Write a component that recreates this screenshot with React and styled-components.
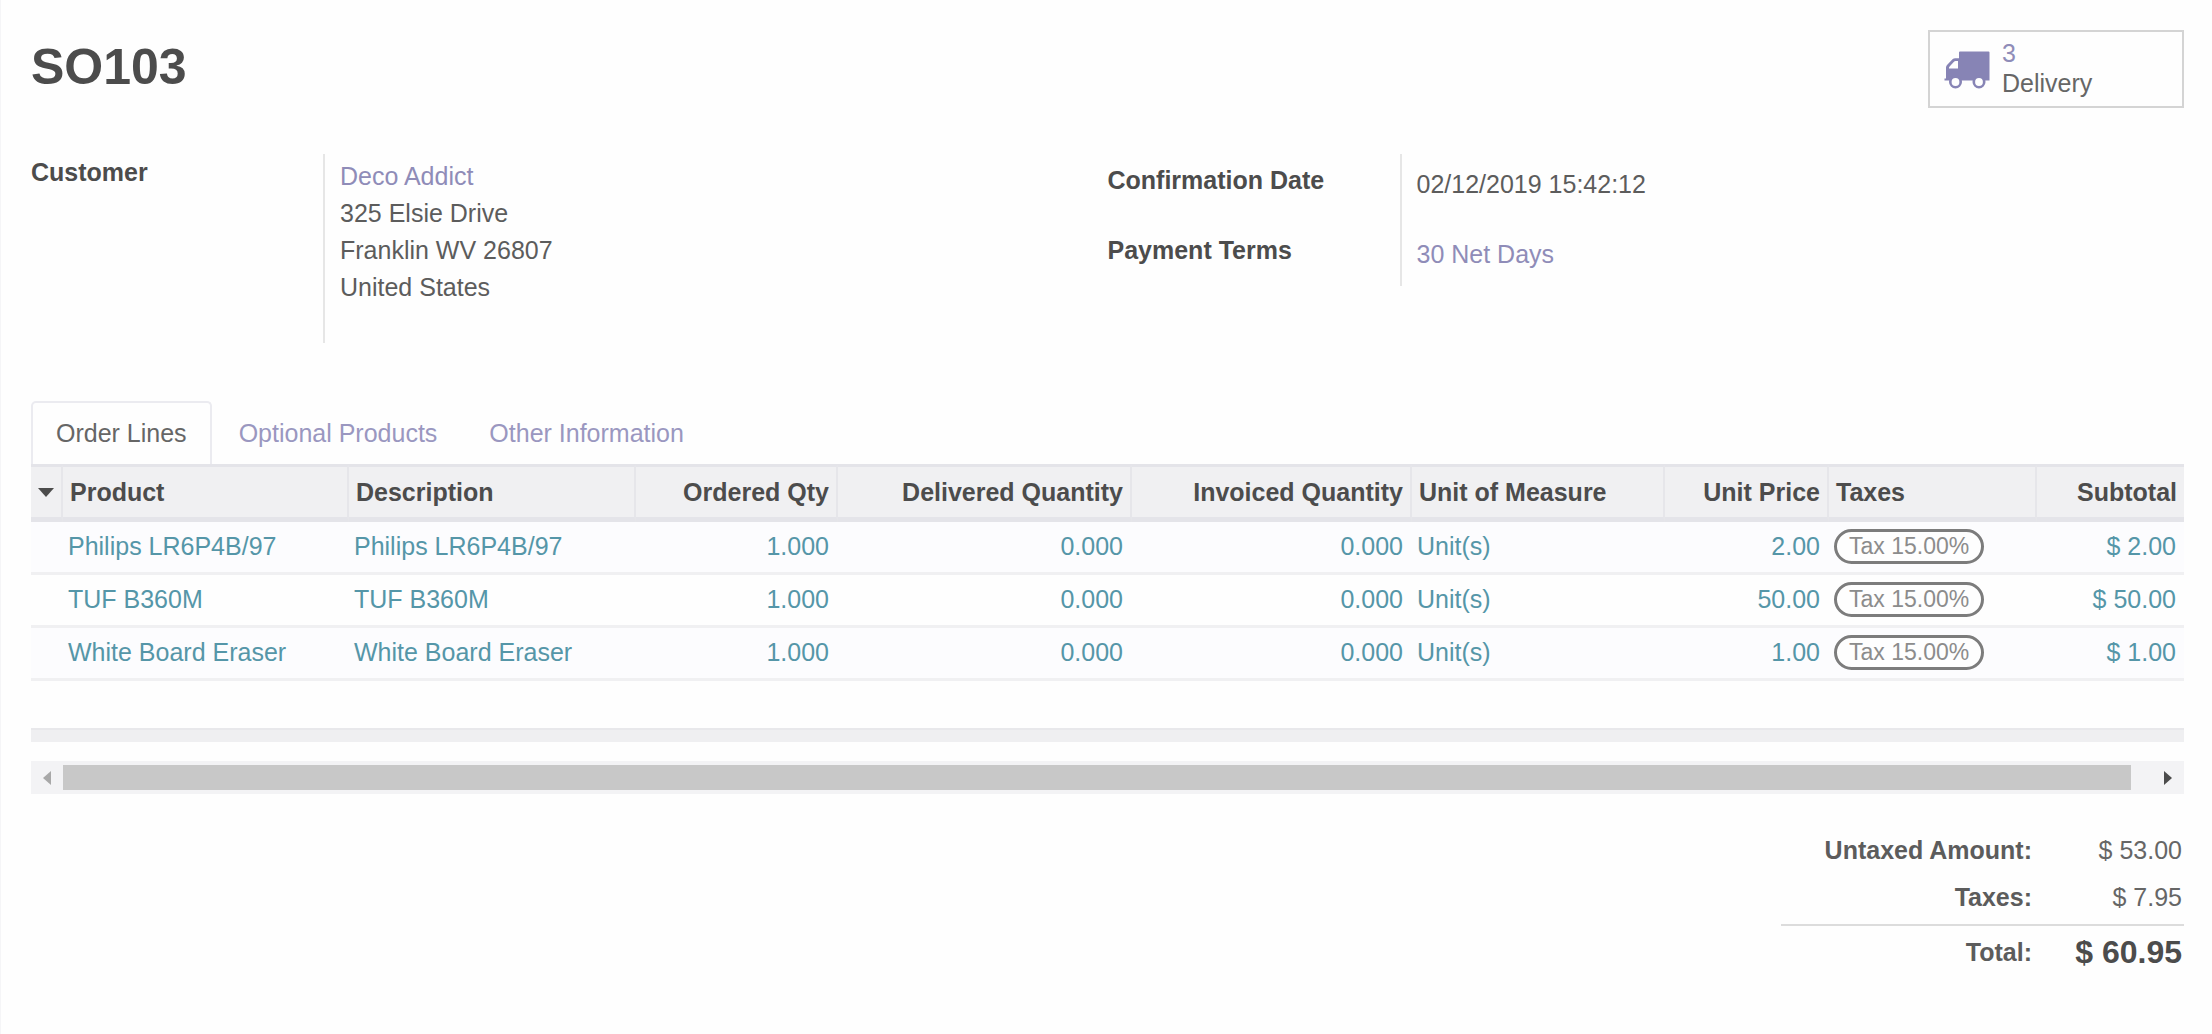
import React, { useState } from "react";
import styled, { createGlobalStyle } from "styled-components";

const GlobalStyle = createGlobalStyle`
  * {
    box-sizing: border-box;
  }
  body {
    margin: 0;
    background: #fefefe;
    color: #4c4c4c;
    font-family: "Liberation Sans", Arial, sans-serif;
    font-size: 25px;
    line-height: 37px;
  }
  button {
    font: inherit;
    color: inherit;
    cursor: pointer;
  }
`;

const Sheet = styled.main`
  min-height: 100vh;
  padding: 30px 28px 40px 30px;
  border-left: 1px solid #f5f5f7;
`;

const Header = styled.header`
  display: flex;
  justify-content: space-between;
  align-items: flex-start;
`;

const Title = styled.h1`
  margin: 9px 0 0;
  font-size: 50px;
  line-height: 56px;
  color: #4c4c4c;
`;

const StatButton = styled.button`
  display: flex;
  align-items: center;
  gap: 12px;
  min-width: 256px;
  height: 78px;
  padding: 0 12px 2px 14px;
  background: none;
  border: 2px solid #d4d4d4;
  line-height: 30px;
  text-align: left;
`;

const TruckIcon = styled.svg`
  width: 46px;
  height: 38px;
  margin-top: 4px;
`;

const StatValue = styled.span`
  display: block;
  color: #8f8cb8;
`;

const StatLabel = styled.span`
  display: block;
  color: #666;
`;

const Details = styled.section`
  display: grid;
  grid-template-columns: 1fr 1fr;
  align-items: start;
  margin-top: 46px;
`;

const Group = styled.dl`
  display: grid;
  grid-template-columns: 292px 1fr;
  margin: 0;
`;

const Label = styled.dt`
  padding-top: ${props => (props.$spaced ? "8px" : "0")};
  font-weight: bold;
`;

const Value = styled.dd`
  margin: 0;
  padding: ${props => (props.$spaced ? "12px 0 21px 15px" : "4px 0 37px 15px")};
  border-left: 2px solid #e6e6e6;
  color: #5c5c5c;
  &:last-child {
    padding-bottom: ${props => (props.$spaced ? "13px" : "37px")};
  }
`;

const Link = styled.a`
  color: #8f8cb8;
  text-decoration: none;
`;

const Tabs = styled.div`
  display: flex;
  gap: 2px;
  margin-top: 58px;
`;

const Tab = styled.button`
  height: 63px;
  padding: 0 23px;
  background: ${props => (props.$active ? "#fefefe" : "none")};
  border: 2px solid ${props => (props.$active ? "#ebebf0" : "transparent")};
  border-bottom: 0;
  border-radius: 5px 5px 0 0;
  color: ${props => (props.$active ? "#666" : "#9a97c0")};
`;

const Table = styled.table`
  width: 100%;
  table-layout: fixed;
  border-collapse: separate;
  border-spacing: 0;
`;

const Th = styled.th`
  height: 58px;
  padding: 0 7px;
  background: #f0f0f2;
  border-top: 3px solid #e4e4e9;
  border-bottom: 5px solid #e4e4e9;
  border-right: 2px solid #e6e6ea;
  text-align: ${props => (props.$right ? "right" : "left")};
  white-space: nowrap;
  &:last-child {
    border-right: 0;
  }
`;

const SortButton = styled.button`
  display: flex;
  padding: 0;
  background: none;
  border: 0;
`;

const Caret = styled.span`
  border: 8px solid transparent;
  border-top: 9px solid #4c4c4c;
  border-bottom: 0;
`;

const Td = styled.td`
  height: 53px;
  padding: 0 9px 2px 5px;
  border-bottom: 3px solid #f0f0f2;
  color: #5596a8;
  text-align: ${props => (props.$right ? "right" : "left")};
  white-space: nowrap;
  &:last-child {
    padding-right: 8px;
  }
`;

const Row = styled.tr`
  background: ${props => (props.$odd ? "#fcfcfe" : "#fefefe")};
`;

const Tag = styled.span`
  display: block;
  width: fit-content;
  padding: 0 12px;
  background: #fefefe;
  border: 3px solid #7c7c7c;
  border-radius: 18px;
  color: #8c8c8c;
  font-size: 23px;
  line-height: 29px;
`;

const TableFoot = styled.div`
  height: 14px;
  margin-top: 47px;
  background: #efeff1;
  border-top: 2px solid #e8e8eb;
`;

const Scrollbar = styled.div`
  display: flex;
  align-items: center;
  height: 33px;
  margin-top: 19px;
  background: #f3f3f5;
`;

const ScrollButton = styled.button`
  display: flex;
  align-items: center;
  justify-content: center;
  width: 32px;
  height: 33px;
  padding: 0;
  background: none;
  border: 0;
`;

const Arrow = styled.span`
  border: 7px solid transparent;
  ${props =>
    props.$left
      ? "border-left: 0; border-right: 8px solid #a8a8a8;"
      : "border-right: 0; border-left: 8px solid #4c4c4c;"}
`;

const Track = styled.div`
  flex: 1;
`;

const Thumb = styled.div`
  width: 99%;
  height: 25px;
  background: #c8c8c8;
`;

const Totals = styled.table`
  margin: 33px 0 0 auto;
  min-width: 403px;
  border-collapse: collapse;
  text-align: right;

  tbody tr:last-child > * {
    padding-bottom: 4px;
    height: 51px;
  }
`;

const TotalLabel = styled.th`
  height: 47px;
  padding: 0;
  text-align: right;
  color: #5c5c5c;
`;

const TotalValue = styled.td`
  width: 152px;
  padding: 0 2px 0 0;
  color: #666;
`;

const GrandRow = styled.tr`
  border-top: 2px solid #dcdcdc;
  th {
    height: 53px;
  }
  td {
    font-size: 32px;
    font-weight: bold;
    color: #4c4c4c;
  }
`;

const tabs = ["Order Lines", "Optional Products", "Other Information"];

const columns = [
  { label: "Product", width: 286 },
  { label: "Description", width: 287 },
  { label: "Ordered Qty", width: 202, right: true },
  { label: "Delivered Quantity", width: 294, right: true },
  { label: "Invoiced Quantity", width: 280, right: true },
  { label: "Unit of Measure", width: 253 },
  { label: "Unit Price", width: 164, right: true },
  { label: "Taxes", width: 208 },
  { label: "Subtotal", width: 147, right: true }
];

const lines = [
  { product: "Philips LR6P4B/97", price: "2.00", subtotal: "$ 2.00" },
  { product: "TUF B360M", price: "50.00", subtotal: "$ 50.00" },
  { product: "White Board Eraser", price: "1.00", subtotal: "$ 1.00" }
];

// column widths are shares of the whole table
const tableWidth = columns.reduce((sum, col) => sum + col.width, 32);
const share = width => ({ width: `${(width / tableWidth) * 100}%` });

const Truck = () => (
  <TruckIcon viewBox="0 0 46 38" aria-hidden="true">
    <path
      fill="#8784b5"
      fillRule="evenodd"
      d="M16 0.5H44.500Q45.500 0.500 45.500 1.500V29.500H0.500V27.500H2V16.500Q2 15 3 14L8.500 8.300Q9.700 7.200 11.200 7.200H15V1.500Q15 0.500 16 0.500ZM5 17.500H14V10H11.500Q10.800 10 10.200 10.600L5.600 15.400Q5 16 5 16.800Z"
    />
    <g fill="#fefefe" stroke="#8784b5" strokeWidth="2.6">
      <circle cx="11.500" cy="31" r="5.200" />
      <circle cx="35" cy="31" r="5.200" />
    </g>
  </TruckIcon>
);

const OrderLines = () => (
  <Table>
    <colgroup>
      <col style={share(32)} />
      {columns.map(col => (
        <col key={col.label} style={share(col.width)} />
      ))}
    </colgroup>
    <thead>
      <tr>
        <Th>
          <SortButton aria-label="Sort lines">
            <Caret />
          </SortButton>
        </Th>
        {columns.map(col => (
          <Th key={col.label} $right={col.right}>
            {col.label}
          </Th>
        ))}
      </tr>
    </thead>
    <tbody>
      {lines.map((line, i) => (
        <Row key={line.product} $odd={i % 2 === 0}>
          <Td />
          <Td>{line.product}</Td>
          <Td>{line.product}</Td>
          <Td $right>1.000</Td>
          <Td $right>0.000</Td>
          <Td $right>0.000</Td>
          <Td>Unit(s)</Td>
          <Td $right>{line.price}</Td>
          <Td>
            <Tag>Tax 15.00%</Tag>
          </Td>
          <Td $right>{line.subtotal}</Td>
        </Row>
      ))}
    </tbody>
  </Table>
);

const App = () => {
  const [active, setActive] = useState(tabs[0]);

  return (
    <Sheet>
      <GlobalStyle />
      <Header>
        <Title>SO103</Title>
        <StatButton>
          <Truck />
          <span>
            <StatValue>3</StatValue>
            <StatLabel>Delivery</StatLabel>
          </span>
        </StatButton>
      </Header>

      <Details>
        <Group>
          <Label>Customer</Label>
          <Value>
            <Link href="#customer">Deco Addict</Link>
            <br />
            325 Elsie Drive
            <br />
            Franklin WV 26807
            <br />
            United States
          </Value>
        </Group>
        <Group>
          <Label $spaced>Confirmation Date</Label>
          <Value $spaced>02/12/2019 15:42:12</Value>
          <Label $spaced>Payment Terms</Label>
          <Value $spaced>
            <Link href="#terms">30 Net Days</Link>
          </Value>
        </Group>
      </Details>

      <Tabs role="tablist">
        {tabs.map(tab => (
          <Tab
            key={tab}
            role="tab"
            aria-selected={tab === active}
            $active={tab === active}
            onClick={() => setActive(tab)}
          >
            {tab}
          </Tab>
        ))}
      </Tabs>
      <OrderLines />
      <TableFoot />
      <Scrollbar>
        <ScrollButton aria-label="Scroll left">
          <Arrow $left />
        </ScrollButton>
        <Track>
          <Thumb />
        </Track>
        <ScrollButton aria-label="Scroll right">
          <Arrow />
        </ScrollButton>
      </Scrollbar>

      <Totals>
        <tbody>
          <tr>
            <TotalLabel scope="row">Untaxed Amount:</TotalLabel>
            <TotalValue>$ 53.00</TotalValue>
          </tr>
          <tr>
            <TotalLabel scope="row">Taxes:</TotalLabel>
            <TotalValue>$ 7.95</TotalValue>
          </tr>
        </tbody>
        <tfoot>
          <GrandRow>
            <TotalLabel scope="row">Total:</TotalLabel>
            <TotalValue>$ 60.95</TotalValue>
          </GrandRow>
        </tfoot>
      </Totals>
    </Sheet>
  );
};

export default App;
